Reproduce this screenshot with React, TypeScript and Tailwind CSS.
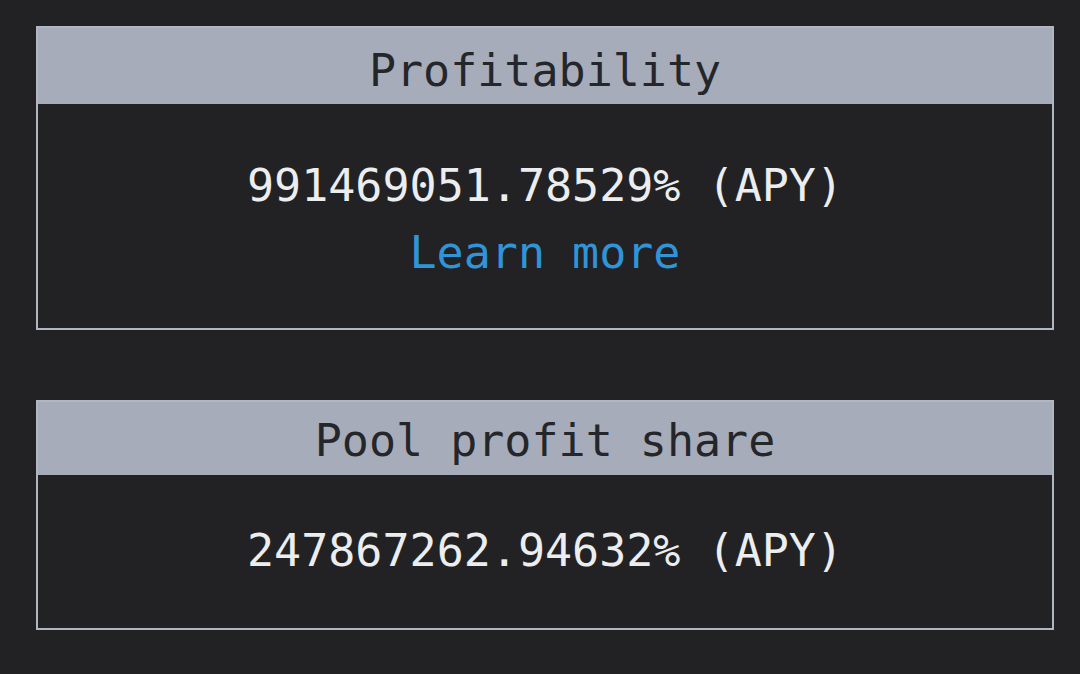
import React from 'react';

const mono = { fontFamily: '"DejaVu Sans Mono", "Liberation Mono", monospace' };

interface StatCardProps {
  title: string;
  value: string;
  link?: string;
  headerPad: string;
  bodyPad: string;
}

const StatCard: React.FC<StatCardProps> = ({ title, value, link, headerPad, bodyPad }) => (
  <div className="w-[1018px] border-2 border-[#b0b6c2]">
    <div className={`bg-[#a6acba] text-center text-[#25262a] ${headerPad}`}>{title}</div>
    <div className={`flex flex-col items-center bg-[#222224] ${bodyPad}`}>
      <div className="text-[#ecedef]">{value}</div>
      {link && (
        <a href="#" className="mt-[13px] text-[#2f95d8]">
          {link}
        </a>
      )}
    </div>
  </div>
);

export default function App() {
  return (
    <div
      className="min-h-[674px] w-[1080px] bg-[#222224] pl-[36px] pt-[26px] text-[45px] leading-[54px]"
      style={mono}
    >
      <div className="flex flex-col gap-[70px]">
        <StatCard
          title="Profitability"
          value="991469051.78529% (APY)"
          link="Learn more"
          headerPad="pt-[16px] pb-[6px]"
          bodyPad="pt-[55px] pb-[48px]"
        />
        <StatCard
          title="Pool profit share"
          value="247867262.94632% (APY)"
          headerPad="pt-[12px] pb-[7px]"
          bodyPad="pt-[49px] pb-[50px]"
        />
      </div>
    </div>
  );
}
